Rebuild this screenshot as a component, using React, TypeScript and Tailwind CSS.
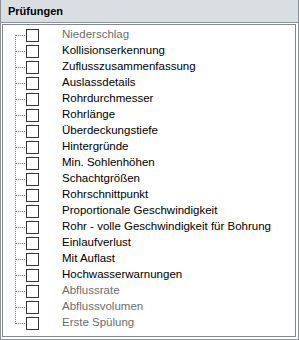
import React from 'react';

type Item = { label: string; enabled: boolean };

const items: Item[] = [
  { label: 'Niederschlag', enabled: false },
  { label: 'Kollisionserkennung', enabled: true },
  { label: 'Zuflusszusammenfassung', enabled: true },
  { label: 'Auslassdetails', enabled: true },
  { label: 'Rohrdurchmesser', enabled: true },
  { label: 'Rohrlänge', enabled: true },
  { label: 'Überdeckungstiefe', enabled: true },
  { label: 'Hintergründe', enabled: true },
  { label: 'Min. Sohlenhöhen', enabled: true },
  { label: 'Schachtgrößen', enabled: true },
  { label: 'Rohrschnittpunkt', enabled: true },
  { label: 'Proportionale Geschwindigkeit', enabled: true },
  { label: 'Rohr - volle Geschwindigkeit für Bohrung', enabled: true },
  { label: 'Einlaufverlust', enabled: true },
  { label: 'Mit Auflast', enabled: true },
  { label: 'Hochwasserwarnungen', enabled: true },
  { label: 'Abflussrate', enabled: false },
  { label: 'Abflussvolumen', enabled: false },
  { label: 'Erste Spülung', enabled: false },
];

function TreeLines({ first, last }: { first: boolean; last: boolean }) {
  return (
    <svg width="23" height="16" className="shrink-0">
      <line
        x1="12.5"
        x2="12.5"
        y1={first ? 8 : 0}
        y2={last ? 9 : 16}
        stroke="#7a7a7a"
        strokeDasharray="1 1"
      />
      <line x1="13" x2="23" y1="8.5" y2="8.5" stroke="#7a7a7a" strokeDasharray="1 1" />
    </svg>
  );
}

export default function App() {
  return (
    <div
      className="w-[299px] h-[340px] flex flex-col bg-white border-x border-b border-[#8c9399]"
      style={{ fontFamily: '"Liberation Sans", Arial, sans-serif' }}
    >
      {/* Header */}
      <div className="h-[23px] shrink-0 bg-[#d9dee3] border-b border-[#8c9399] flex items-center pl-[7px]">
        <span className="text-[11px] font-bold text-black">Prüfungen</span>
      </div>

      {/* Tree list */}
      <div className="flex-1 flex pl-px pt-px pr-[2px] pb-[2px]">
        <div className="flex-1 border border-[#828790] pt-[2px]">
          {items.map((item, i) => (
            <div key={item.label} className="flex items-center h-[16px]">
              <TreeLines first={i === 0} last={i === items.length - 1} />
              <div className="w-[13px] h-[13px] border border-[#333333] bg-white shrink-0" />
              <span
                className={`ml-[23px] text-[11.5px] whitespace-nowrap ${
                  item.enabled ? 'text-black' : 'text-[#6d6d6d]'
                }`}
              >
                {item.label}
              </span>
            </div>
          ))}
        </div>
      </div>
    </div>
  );
}
